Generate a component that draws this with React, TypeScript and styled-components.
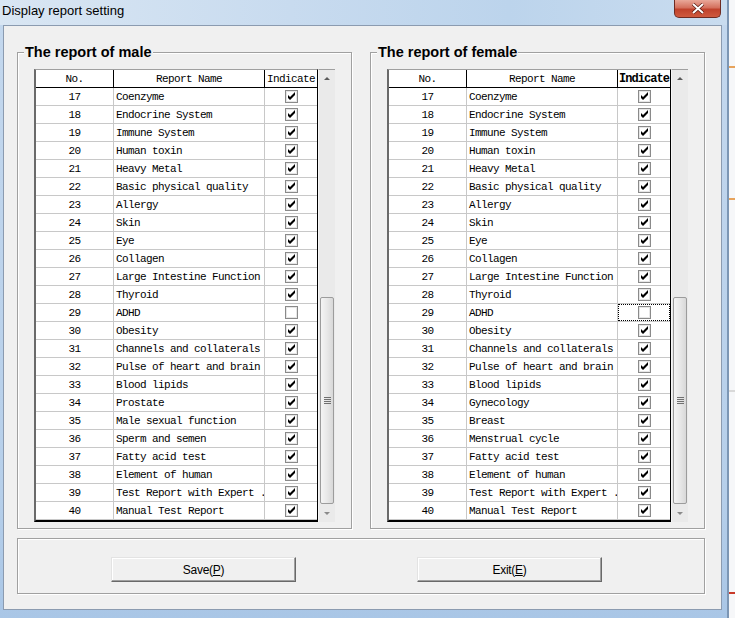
import React from "react";
import styled, { createGlobalStyle } from "styled-components";

type Report = {
  no: number;
  name: string;
  checked: boolean;
  focused?: boolean;
};

const commonNames = [
  "Coenzyme",
  "Endocrine System",
  "Immune System",
  "Human toxin",
  "Heavy Metal",
  "Basic physical quality",
  "Allergy",
  "Skin",
  "Eye",
  "Collagen",
  "Large Intestine Function",
  "Thyroid",
  "ADHD",
  "Obesity",
  "Channels and collaterals",
  "Pulse of heart and brain",
  "Blood lipids",
];

const tailNames = ["Fatty acid test", "Element of human", "Test Report with Expert .", "Manual Test Report"];

const buildList = (middle: string[], focusNo?: number): Report[] =>
  [...commonNames, ...middle, ...tailNames].map((name, i) => ({
    no: 17 + i,
    name,
    checked: name !== "ADHD",
    focused: focusNo === 17 + i,
  }));

const maleReports = buildList(["Prostate", "Male sexual function", "Sperm and semen"]);
const femaleReports = buildList(["Gynecology", "Breast", "Menstrual cycle"], 29);

const GlobalStyle = createGlobalStyle`
  html, body {
    margin: 0;
    padding: 0;
  }
  body {
    background: #eef2f6;
    font-family: "Liberation Sans", Arial, sans-serif;
  }
`;

const Page = styled.div`
  display: flex;
  width: 735px;
  height: 618px;
  overflow: hidden;
`;

const Window = styled.div`
  width: 727px;
  display: flex;
  flex-direction: column;
  background: linear-gradient(to bottom, #c4d8ee, #b6cfea 80%, #a9c6e6);
`;

const TitleBar = styled.div`
  height: 25px;
  display: flex;
  justify-content: space-between;
  align-items: flex-start;
  background: linear-gradient(to right, #d9e6f3, #c8dbef 40%, #bcd4ec 70%, #c9dcef);
`;

const TitleText = styled.div`
  font-size: 13px;
  line-height: 15px;
  padding: 3px 0 0 2px;
  color: #000;
`;

const CloseButton = styled.div`
  width: 47px;
  height: 18px;
  margin-right: 6px;
  box-sizing: border-box;
  border: 1px solid #6e2b22;
  border-top: none;
  border-radius: 0 0 5px 5px;
  background: linear-gradient(to bottom, #e9a899, #d4705d 45%, #c0422c 55%, #cf5a3f);
  display: flex;
  align-items: center;
  justify-content: center;
`;

const Client = styled.div`
  flex: 1;
  margin: 0 5px 8px 3px;
  border: 1px solid #8b9bb0;
  background: #f0f0f0;
  padding: 18px 16px 11px 13px;
  display: flex;
  flex-direction: column;
`;

const GroupsRow = styled.div`
  display: flex;
  gap: 18px;
`;

const Group = styled.fieldset`
  width: 335px;
  box-sizing: border-box;
  margin: 0;
  min-width: 0;
  padding: 8px 16px 6px;
  border: 1px solid #a0a0a0;
  box-shadow: inset 1px 1px 0 #fff, 1px 1px 0 #fff;
`;

const Legend = styled.legend`
  margin-left: -10px;
  padding: 0 1px;
  font-size: 14.5px;
  font-weight: bold;
  line-height: 17px;
  color: #000;
  background: #f0f0f0;
`;

const ListView = styled.div`
  display: flex;
`;

const Grid = styled.div`
  width: 284px;
  box-sizing: border-box;
  background: #fff;
  border-top: 1px solid #a0a0a0;
  border-left: 2px solid #6a6a6a;
  border-right: 1px solid #000;
  border-bottom: 2px solid #000;
`;

const Row = styled.div<{ $header?: boolean }>`
  display: grid;
  grid-template-columns: 78px 151px 52px;
  height: 18px;
  box-sizing: border-box;
  border-bottom: 1px solid ${(p) => (p.$header ? "#000" : "#c8c8c8")};
  font-family: "Liberation Mono", "Courier New", monospace;
  font-size: 11px;
  letter-spacing: -0.6px;
  color: #000;
`;

const Cell = styled.div<{ $align?: "left" | "center"; $header?: boolean; $last?: boolean; $bold?: boolean; $focused?: boolean }>`
  display: flex;
  align-items: center;
  justify-content: ${(p) => (p.$align === "left" ? "flex-start" : "center")};
  padding-left: ${(p) => (p.$align === "left" ? "2px" : "0")};
  overflow: hidden;
  white-space: nowrap;
  font-weight: ${(p) => (p.$bold ? "bold" : "normal")};
  font-size: ${(p) => (p.$bold ? "12px" : "inherit")};
  letter-spacing: ${(p) => (p.$bold ? "-0.95px" : "inherit")};
  border-right: ${(p) => (p.$last ? "none" : `1px solid ${p.$header ? "#000" : "#c8c8c8"}`)};
  outline: ${(p) => (p.$focused ? "1px dotted #000" : "none")};
  outline-offset: -1px;
`;

const ScrollBar = styled.div`
  width: 17px;
  display: flex;
  flex-direction: column;
  background: #eaeaea;
  border-top: 1px solid #a0a0a0;
  border-left: 1px solid #f6f6f6;
`;

const ArrowButton = styled.div`
  height: 17px;
  display: flex;
  align-items: center;
  justify-content: center;
`;

const Arrow = styled.div<{ $down?: boolean }>`
  width: 0;
  height: 0;
  border-left: 3px solid transparent;
  border-right: 3px solid transparent;
  ${(p) => (p.$down ? "border-top: 3px solid #8a8a8a;" : "border-bottom: 3px solid #5a5a5a;")}
`;

const Track = styled.div`
  flex: 1;
  display: flex;
  flex-direction: column;
`;

const Thumb = styled.div`
  margin: 210px 1px 0 1px;
  height: 207px;
  box-sizing: border-box;
  border: 1px solid #9c9c9c;
  border-radius: 2px;
  background: linear-gradient(to right, #f4f4f4, #e8e8e8 50%, #d8d8d8);
  display: flex;
  flex-direction: column;
  align-items: center;
  justify-content: center;
  gap: 1px;
`;

const Grip = styled.div`
  width: 7px;
  height: 1px;
  background: #707070;
`;

const BottomGroup = styled.div`
  margin-top: 9px;
  height: 56px;
  box-sizing: border-box;
  border: 1px solid #a0a0a0;
  box-shadow: inset 1px 1px 0 #fff, 1px 1px 0 #fff;
  display: flex;
  align-items: flex-start;
  gap: 121px;
  padding: 18px 0 0 93px;
`;

const Button = styled.button`
  width: 185px;
  height: 25px;
  box-sizing: border-box;
  border: 1px solid;
  border-color: #e3e3e3 #696969 #696969 #e3e3e3;
  box-shadow: inset -1px -1px 0 #a0a0a0, inset 1px 1px 0 #fff;
  background: #f0f0f0;
  font-family: "Liberation Sans", Arial, sans-serif;
  font-size: 12px;
  letter-spacing: -0.3px;
  color: #000;
  padding: 0;
`;

const Outside = styled.div`
  flex: 1;
  background: #f6f7f9;
  border-left: 2px solid #7c96b4;
  display: flex;
  flex-direction: column;
`;

const OutsideLine = styled.div<{ $color: string; $top: number }>`
  margin-top: ${(p) => p.$top}px;
  height: 2px;
  background: ${(p) => p.$color};
`;

const Checkbox: React.FC<{ checked: boolean }> = ({ checked }) => (
  <svg width="13" height="13" viewBox="0 0 13 13">
    <rect x="0.5" y="0.5" width="12" height="12" fill="#fff" stroke="#8a8a8a" />
    <rect x="1.5" y="1.5" width="10" height="10" fill="none" stroke="#e6e6e6" />
    {checked && <path d="M3 5 L5 7 L10 2 L10 5 L5 10 L3 8 Z" fill="#000" />}
  </svg>
);

const ReportList: React.FC<{ title: string; reports: Report[]; boldIndicate?: boolean }> = ({
  title,
  reports,
  boldIndicate,
}) => (
  <Group>
    <Legend>{title}</Legend>
    <ListView>
      <Grid>
        <Row $header>
          <Cell $header>No.</Cell>
          <Cell $header>Report Name</Cell>
          <Cell $header $last $bold={boldIndicate}>
            Indicate
          </Cell>
        </Row>
        {reports.map((r) => (
          <Row key={r.no}>
            <Cell>{r.no}</Cell>
            <Cell $align="left">{r.name}</Cell>
            <Cell $last $focused={r.focused}>
              <Checkbox checked={r.checked} />
            </Cell>
          </Row>
        ))}
      </Grid>
      <ScrollBar>
        <ArrowButton>
          <Arrow />
        </ArrowButton>
        <Track>
          <Thumb>
            <Grip />
            <Grip />
            <Grip />
            <Grip />
          </Thumb>
        </Track>
        <ArrowButton>
          <Arrow $down />
        </ArrowButton>
      </ScrollBar>
    </ListView>
  </Group>
);

const Underline = styled.span`
  text-decoration: underline;
`;

export default function App() {
  return (
    <Page>
      <GlobalStyle />
      <Window>
        <TitleBar>
          <TitleText>Display report setting</TitleText>
          <CloseButton>
            <svg width="14" height="11" viewBox="0 0 14 11">
              <path d="M2 1 L12 10 M12 1 L2 10" stroke="#5a1a10" strokeWidth="3.4" />
              <path d="M2 1 L12 10 M12 1 L2 10" stroke="#fff" strokeWidth="2" />
            </svg>
          </CloseButton>
        </TitleBar>
        <Client>
          <GroupsRow>
            <ReportList title="The report of male" reports={maleReports} />
            <ReportList title="The report of female" reports={femaleReports} boldIndicate />
          </GroupsRow>
          <BottomGroup>
            <Button>
              Save(<Underline>P</Underline>)
            </Button>
            <Button>
              Exit(<Underline>E</Underline>)
            </Button>
          </BottomGroup>
        </Client>
      </Window>
      <Outside>
        <OutsideLine $color="#e7a35c" $top={66} />
        <OutsideLine $color="#e7a35c" $top={130} />
        <OutsideLine $color="#d9d9d9" $top={190} />
        <OutsideLine $color="#c93a2a" $top={200} />
      </Outside>
    </Page>
  );
}
